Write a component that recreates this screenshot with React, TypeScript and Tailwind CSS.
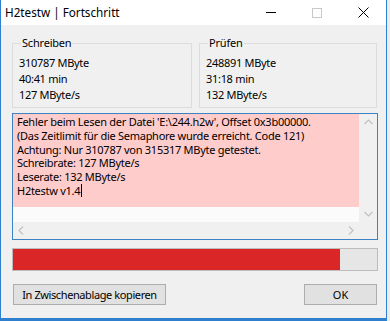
import React from "react";

const font = { fontFamily: '"Noto Sans", "Open Sans", sans-serif' };

function Group({ title, lines, className }: { title: string; lines: string[]; className: string }) {
  return (
    <div className={`relative border border-[#dcdcdc] h-[65px] ${className}`}>
      <div className="absolute left-[8px] top-[-9px] bg-[#f0f0f0] px-[1px] leading-[16px] text-[11px] tracking-[-0.2px]">{title}</div>
      <div className="pt-[11px] pl-[6px] flex flex-col leading-[16px] text-[11px] tracking-[-0.3px]">
        {lines.map((l) => (
          <div key={l}>{l}</div>
        ))}
      </div>
    </div>
  );
}

export default function App() {
  return (
    <div className="w-[390px] h-[321px] bg-[#ececec] flex text-[12px] text-black" style={font}>
      <div className="w-[387px] h-[321px] flex flex-col border-l border-r border-b-[3px] border-[#2f7fcf] bg-[#f0f0f0]">
        {/* title bar */}
        <div className="h-[25px] bg-white flex items-center justify-between pl-[4px]">
          <span className="text-[11.7px] leading-[25px]">H2testw | Fortschritt</span>
          <div className="flex items-center h-full">
            <div className="w-[46px] h-full flex items-center justify-center">
              <div className="w-[10px] h-px bg-black" />
            </div>
            <div className="w-[46px] h-full flex items-center justify-center">
              <div className="w-[10px] h-[10px] border border-[#c8c8c8]" />
            </div>
            <div className="w-[46px] h-full flex items-center justify-center">
              <svg width="11" height="11" viewBox="0 0 11 11">
                <path d="M0.5 0.5 L10.5 10.5 M10.5 0.5 L0.5 10.5" stroke="#000" strokeWidth="1" />
              </svg>
            </div>
          </div>
        </div>
        {/* client */}
        <div className="flex-1 pl-[11px] pr-[8px]">
          <div className="flex gap-[7px] mt-[18px]">
            <Group title="Schreiben" lines={["310787 MByte", "40:41 min", "127 MByte/s"]} className="w-[180px]" />
            <Group title="Prüfen" lines={["248891 MByte", "31:18 min", "132 MByte/s"]} className="w-[178px]" />
          </div>
          {/* text area */}
          <div className="mt-[5px] w-[366px] h-[127px] border border-[#3c83c4] bg-white flex flex-col">
            <div className="flex flex-1">
              <div className="flex-1 flex flex-col">
                <div className="h-[93px] bg-[#ffcccc] pl-[4px] pt-[1px] text-[11px] tracking-[-0.27px] leading-[13.8px] whitespace-nowrap overflow-hidden">
                  <div>Fehler beim Lesen der Datei 'E:\244.h2w', Offset 0x3b00000.</div>
                  <div>(Das Zeitlimit für die Semaphore wurde erreicht. Code 121)</div>
                  <div>Achtung: Nur 310787 von 315317 MByte getestet.</div>
                  <div>Schreibrate: 127 MByte/s</div>
                  <div>Leserate: 132 MByte/s</div>
                  <div className="flex items-center">
                    H2testw v1.4<span className="inline-block w-px h-[13px] bg-black ml-[1px]" />
                  </div>
                </div>
                <div className="flex-1 bg-[#fbfbfb]" />
              </div>
              <div className="w-[18px] bg-[#f0f0f0] flex flex-col items-center justify-between py-[5px]">
                <svg width="9" height="6" viewBox="0 0 9 6">
                  <path d="M0.5 5 L4.5 1 L8.5 5" stroke="#c2c2c2" strokeWidth="1.2" fill="none" />
                </svg>
                <svg width="9" height="6" viewBox="0 0 9 6">
                  <path d="M0.5 1 L4.5 5 L8.5 1" stroke="#c2c2c2" strokeWidth="1.2" fill="none" />
                </svg>
              </div>
            </div>
            <div className="h-[17px] flex">
              <div className="flex-1 bg-[#f0f0f0] flex items-center justify-between px-[5px]">
                <svg width="6" height="9" viewBox="0 0 6 9">
                  <path d="M5 0.5 L1 4.5 L5 8.5" stroke="#c2c2c2" strokeWidth="1.2" fill="none" />
                </svg>
                <svg width="6" height="9" viewBox="0 0 6 9">
                  <path d="M1 0.5 L5 4.5 L1 8.5" stroke="#c2c2c2" strokeWidth="1.2" fill="none" />
                </svg>
              </div>
              <div className="w-[18px] bg-[#f0f0f0]" />
            </div>
          </div>
          {/* progress */}
          <div className="mt-[8px] w-[366px] h-[23px] border border-[#bcbcbc] bg-[#e6e6e6]">
            <div className="h-full bg-[#da2626] w-[327px]" />
          </div>
          {/* buttons */}
          <div className="mt-[13px] flex justify-between w-[366px]">
            <button className="ml-[1px] w-[153px] h-[21px] border border-[#adadad] bg-[#e1e1e1] text-[11px] tracking-[-0.4px] leading-[19px] whitespace-nowrap">
              In Zwischenablage kopieren
            </button>
            <button className="mr-[1px] w-[73px] h-[21px] border border-[#adadad] bg-[#e1e1e1] text-[11px] leading-[19px]">
              OK
            </button>
          </div>
        </div>
      </div>
    </div>
  );
}
